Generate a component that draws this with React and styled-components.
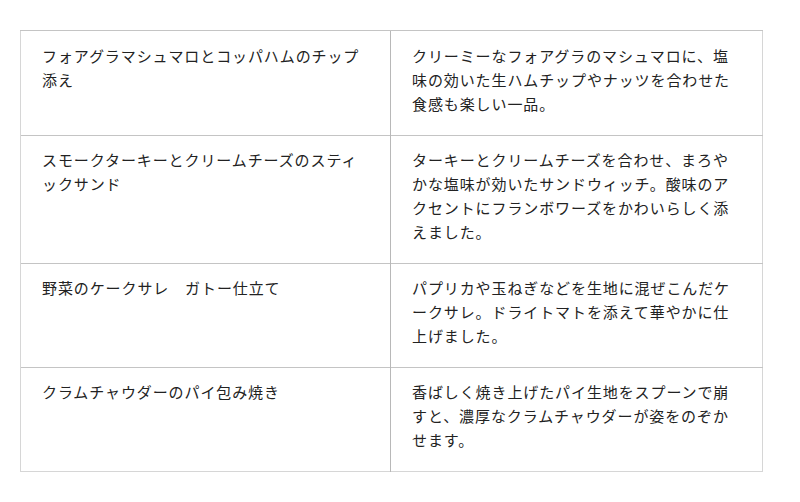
import styled, { createGlobalStyle } from "styled-components";

const MENU = [
  {
    name: "フォアグラマシュマロとコッパハムのチップ添え",
    desc: "クリーミーなフォアグラのマシュマロに、塩味の効いた生ハムチップやナッツを合わせた食感も楽しい一品。",
  },
  {
    name: "スモークターキーとクリームチーズのスティックサンド",
    desc: "ターキーとクリームチーズを合わせ、まろやかな塩味が効いたサンドウィッチ。酸味のアクセントにフランボワーズをかわいらしく添えました。",
  },
  {
    name: "野菜のケークサレ　ガトー仕立て",
    desc: "パプリカや玉ねぎなどを生地に混ぜこんだケークサレ。ドライトマトを添えて華やかに仕上げました。",
  },
  {
    name: "クラムチャウダーのパイ包み焼き",
    desc: "香ばしく焼き上げたパイ生地をスプーンで崩すと、濃厚なクラムチャウダーが姿をのぞかせます。",
  },
];

const GlobalStyle = createGlobalStyle`
  body {
    margin: 0;
    background: #fff;
    font-family: "Noto Sans CJK JP", "Noto Sans", sans-serif;
    color: #222;
  }
`;

const Page = styled.div`
  padding: 30px 20px;
`;

const Table = styled.table`
  width: 742px;
  border-collapse: collapse;
  table-layout: fixed;
  border: 1px solid #d6d6d6;
`;

const Col = styled.col`
  width: ${(p) => p.$w};
`;

const Row = styled.tr`
  &:first-child td {
    padding-top: 13px;
  }
`;

const Cell = styled.td`
  box-sizing: border-box;
  padding: 12px 21px 19px;
  border-top: 1px solid #c4c4c4;
  border-left: ${(p) => (p.$first ? "1px solid #d6d6d6" : "1px solid #b8b8b8")};
  vertical-align: top;
  font-size: 15px;
  line-height: 24px;
  letter-spacing: 0.9px;
  word-break: break-all;
  line-break: loose;
`;

export default function App() {
  return (
    <>
      <GlobalStyle />
      <Page>
        <Table>
          <colgroup>
            <Col $w="370px" />
            <Col $w="372px" />
          </colgroup>
          <tbody>
            {MENU.map((item) => (
              <Row key={item.name}>
                <Cell $first>{item.name}</Cell>
                <Cell>{item.desc}</Cell>
              </Row>
            ))}
          </tbody>
        </Table>
      </Page>
    </>
  );
}
